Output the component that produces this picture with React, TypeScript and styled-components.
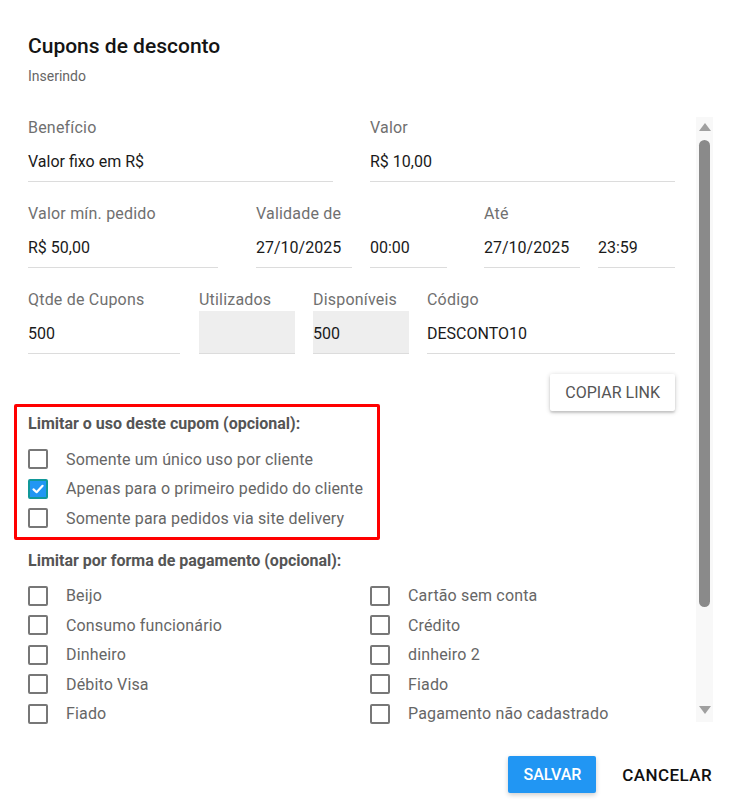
import styled, { createGlobalStyle } from 'styled-components'

const GlobalStyle = createGlobalStyle`
html, body {
	margin: 0;
	padding: 0;
	background: #ffffff;
	font-family: Roboto, "Noto Sans", "Liberation Sans", sans-serif;
}
*, *::before, *::after {
	box-sizing: border-box;
}
`;

type FieldDef = {
	label: string;
	value?: string;
	width: number;
	offset: number;
	disabled?: boolean;
};

const rows: FieldDef[][] = [
	[
		{ label: 'Benefício', value: 'Valor fixo em R$', width: 305, offset: 0 },
		{ label: 'Valor', value: 'R$ 10,00', width: 305, offset: 37 },
	],
	[
		{ label: 'Valor mín. pedido', value: 'R$ 50,00', width: 190, offset: 0 },
		{ label: 'Validade de', value: '27/10/2025', width: 96, offset: 38 },
		{ label: '', value: '00:00', width: 77, offset: 18 },
		{ label: 'Até', value: '27/10/2025', width: 96, offset: 37 },
		{ label: '', value: '23:59', width: 77, offset: 18 },
	],
	[
		{ label: 'Qtde de Cupons', value: '500', width: 152, offset: 0 },
		{ label: 'Utilizados', value: '', width: 96, offset: 19, disabled: true },
		{ label: 'Disponíveis', value: '500', width: 96, offset: 18, disabled: true },
		{ label: 'Código', value: 'DESCONTO10', width: 248, offset: 18 },
	],
];

const usageOptions = [
	{ label: 'Somente um único uso por cliente', checked: false },
	{ label: 'Apenas para o primeiro pedido do cliente', checked: true },
	{ label: 'Somente para pedidos via site delivery', checked: false },
];

const paymentOptions = [
	'Beijo',
	'Consumo funcionário',
	'Dinheiro',
	'Débito Visa',
	'Fiado',
	'Cartão sem conta',
	'Crédito',
	'dinheiro 2',
	'Fiado',
	'Pagamento não cadastrado',
];

const CheckBox = ({ checked }: { checked?: boolean }) => (
	<Box $checked={checked}>
		{checked && (
			<svg width="14" height="14" viewBox="0 0 14 14">
				<path d="M2.5 7.4 L5.6 10.2 L11.6 3.8" fill="none" stroke="#ffffff" strokeWidth="2.2" strokeLinecap="round" strokeLinejoin="round" />
			</svg>
		)}
	</Box>
);

const App = () => {
	return (
		<Dialog>
			<GlobalStyle />
			<Header>
				<Title>Cupons de desconto</Title>
				<Subtitle>Inserindo</Subtitle>
			</Header>

			<Body>
				<Content>
					{rows.map((row, i) => (
						<FieldRow key={i}>
							{row.map((f, j) => (
								<Field key={j} $width={f.width} $offset={f.offset}>
									<FieldLabel>{f.label}</FieldLabel>
									<FieldInput $disabled={f.disabled}>{f.value}</FieldInput>
								</Field>
							))}
						</FieldRow>
					))}

					<LinkRow>
						<RaisedButton>Copiar link</RaisedButton>
					</LinkRow>

					<Section $highlight>
						<SectionTitle>Limitar o uso deste cupom (opcional):</SectionTitle>
						<OptionList>
							{usageOptions.map((o) => (
								<Option key={o.label}>
									<CheckBox checked={o.checked} />
									<OptionText>{o.label}</OptionText>
								</Option>
							))}
						</OptionList>
					</Section>

					<Section>
						<SectionTitle>Limitar por forma de pagamento (opcional):</SectionTitle>
						<PaymentGrid>
							{paymentOptions.map((p, i) => (
								<Option key={i}>
									<CheckBox />
									<OptionText>{p}</OptionText>
								</Option>
							))}
						</PaymentGrid>
					</Section>
				</Content>

				<Scrollbar>
					<Arrow $up />
					<Track>
						<Thumb />
					</Track>
					<Arrow />
				</Scrollbar>
			</Body>

			<Footer>
				<PrimaryButton>Salvar</PrimaryButton>
				<TextButton>Cancelar</TextButton>
			</Footer>
		</Dialog>
	)
}

const Dialog = styled.div`
width: 743px;
height: 812px;
background: #ffffff;
display: flex;
flex-direction: column;
`;

const Header = styled.div`
padding: 33px 28px 0 28px;
display: flex;
flex-direction: column;
gap: 9px;
height: 117px;
flex-shrink: 0;
`;

const Title = styled.div`
font-size: 21px;
line-height: 26px;
font-weight: 500;
color: #141414;
`;

const Subtitle = styled.div`
font-size: 14px;
line-height: 16px;
color: #666666;
`;

const Body = styled.div`
display: flex;
height: 607px;
flex-shrink: 0;
`;

const Content = styled.div`
width: 696px;
padding: 1px 21px 0 28px;
overflow: hidden;
`;

const FieldRow = styled.div`
display: flex;
margin-bottom: 22px;
&:nth-child(3) {
	margin-bottom: 20px;
}
`;

const Field = styled.div<{ $width: number; $offset: number }>`
display: flex;
flex-direction: column;
flex-shrink: 0;
width: ${(p) => p.$width}px;
margin-left: ${(p) => p.$offset}px;
`;

const FieldLabel = styled.div`
font-size: 16px;
letter-spacing: 0.2px;
line-height: 18px;
height: 18px;
color: #707070;
margin: 1px 0 2px 0;
`;

const FieldInput = styled.div<{ $disabled?: boolean }>`
height: 43px;
display: flex;
align-items: center;
padding-top: 2px;
font-size: 16px;
color: #1a1a1a;
background: ${(p) => (p.$disabled ? '#eeeeee' : 'transparent')};
border-bottom: 1px solid #dcdcdc;
`;

const LinkRow = styled.div`
display: flex;
justify-content: flex-end;
align-items: flex-start;
height: 41px;
`;

const RaisedButton = styled.button`
height: 37px;
padding: 0 15px;
border: 0;
border-radius: 2px;
background: #ffffff;
font-family: inherit;
font-size: 16px;
text-transform: uppercase;
color: #555555;
box-shadow: 0 1px 5px rgba(0, 0, 0, 0.2), 0 2px 2px rgba(0, 0, 0, 0.12);
`;

const Section = styled.div<{ $highlight?: boolean }>`
position: relative;
display: flex;
flex-direction: column;
margin-bottom: ${(p) => (p.$highlight ? '18.5px' : '0')};

${(p) => p.$highlight && `
	&::before {
		content: '';
		position: absolute;
		left: -14px;
		top: -11px;
		width: 366px;
		height: 136px;
		border: 3px solid #ff0000;
		border-radius: 2px;
		pointer-events: none;
	}
`}
`;

const SectionTitle = styled.div`
font-size: 16px;
line-height: 18px;
font-weight: 700;
color: #555555;
margin-bottom: 11.5px;
`;

const OptionList = styled.div`
display: flex;
flex-direction: column;
`;

const PaymentGrid = styled.div`
display: grid;
grid-template-columns: 342px 1fr;
grid-template-rows: repeat(5, 29.5px);
grid-auto-flow: column;
`;

const Option = styled.div`
display: flex;
align-items: center;
height: 29.5px;
gap: 18px;
`;

const Box = styled.div<{ $checked?: boolean }>`
width: 20px;
height: 20px;
flex-shrink: 0;
border-radius: 2px;
border: 2px solid ${(p) => (p.$checked ? '#11989a' : '#777777')};
background: ${(p) => (p.$checked ? '#2196f3' : '#ffffff')};
display: flex;
align-items: center;
justify-content: center;
`;

const OptionText = styled.span`
font-size: 16px;
letter-spacing: 0.15px;
color: #666666;
white-space: nowrap;
`;

const Scrollbar = styled.div`
width: 17px;
height: 605px;
background: #f8f8f8;
display: flex;
flex-direction: column;
align-items: center;
padding: 6px 0 8px 0;
`;

const Arrow = styled.div<{ $up?: boolean }>`
width: 0;
height: 0;
border-left: 6px solid transparent;
border-right: 6px solid transparent;
${(p) => (p.$up ? 'border-bottom: 8px solid #a0a0a0;' : 'border-top: 8px solid #a0a0a0;')}
`;

const Track = styled.div`
flex: 1;
width: 100%;
display: flex;
justify-content: center;
padding-top: 9px;
`;

const Thumb = styled.div`
width: 11px;
height: 467px;
border-radius: 6px;
background: #8a8a8a;
`;

const Footer = styled.div`
flex: 1;
display: flex;
justify-content: flex-end;
align-items: flex-start;
padding: 32px 15px 0 0;
gap: 10px;
`;

const PrimaryButton = styled.button`
height: 37px;
padding: 0 15px;
border: 0;
border-radius: 2px;
background: #2196f3;
color: #ffffff;
font-family: inherit;
font-size: 16px;
font-weight: 500;
text-transform: uppercase;
box-shadow: 0 2px 5px rgba(0, 0, 0, 0.2);
`;

const TextButton = styled.button`
height: 37px;
padding: 0 16px;
border: 0;
background: transparent;
color: #111111;
font-family: inherit;
font-size: 17px;
letter-spacing: 0.4px;
font-weight: 500;
text-transform: uppercase;
`;

export default App
